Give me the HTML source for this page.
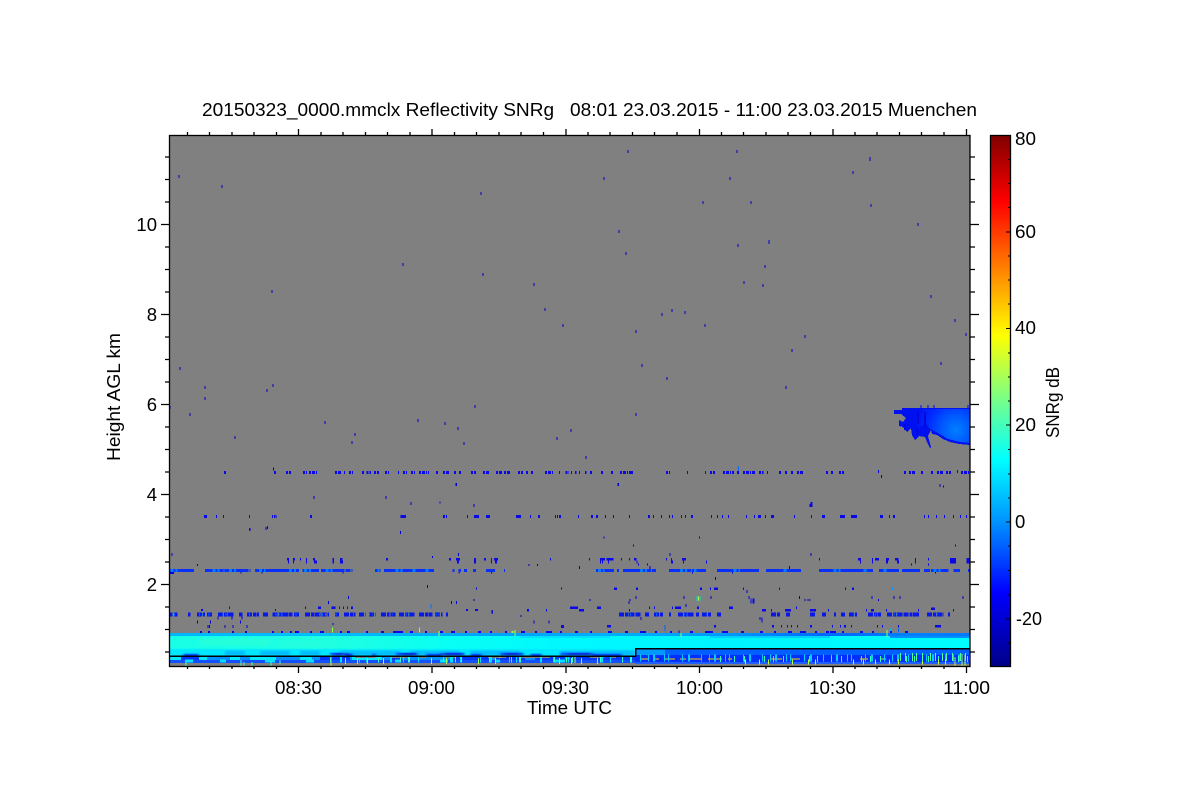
<!DOCTYPE html>
<html><head><meta charset="utf-8"><title>20150323_0000.mmclx Reflectivity SNRg</title>
<style>
html,body{margin:0;padding:0;background:#fff;width:1200px;height:800px;overflow:hidden}
svg{display:block}
text{font-family:"Liberation Sans",sans-serif;fill:#000;font-size:18.5px;white-space:pre}
</style></head><body>
<svg width="1200" height="800" viewBox="0 0 1200 800" xmlns="http://www.w3.org/2000/svg">
<defs>
<linearGradient id="cb" x1="0" y1="0" x2="0" y2="1">
<stop offset="0" stop-color="#800000"/><stop offset=".125" stop-color="#ff0000"/><stop offset=".25" stop-color="#ff8000"/><stop offset=".376" stop-color="#ffff00"/><stop offset=".49" stop-color="#80ff80"/><stop offset=".61" stop-color="#00ffff"/><stop offset=".73" stop-color="#0090ff"/><stop offset=".86" stop-color="#0000ff"/><stop offset="1" stop-color="#000088"/>
</linearGradient>
<linearGradient id="b1" x1="0" y1="0" x2="1" y2="0">
<stop offset="0" stop-color="#00b8ff"/><stop offset=".2" stop-color="#00c0ff"/><stop offset=".42" stop-color="#00a0ff"/><stop offset=".55" stop-color="#00b0ff"/><stop offset=".7" stop-color="#0098ff"/><stop offset=".82" stop-color="#0068ff"/><stop offset=".93" stop-color="#0080ff"/><stop offset="1" stop-color="#0078ff"/>
</linearGradient>
<linearGradient id="b2" x1="0" y1="0" x2="1" y2="0">
<stop offset="0" stop-color="#18ffe6"/><stop offset=".2" stop-color="#20ffe0"/><stop offset=".35" stop-color="#08fff4"/><stop offset=".5" stop-color="#00f8ff"/><stop offset=".7" stop-color="#00f4ff"/><stop offset="1" stop-color="#00fcff"/>
</linearGradient>
<radialGradient id="p" gradientUnits="userSpaceOnUse" cx="956" cy="430" r="42">
<stop offset="0" stop-color="#0080ff"/><stop offset=".35" stop-color="#0058ff"/><stop offset=".7" stop-color="#0028ff"/><stop offset="1" stop-color="#0010f0"/>
</radialGradient>
<filter id="soft" x="-2%" y="-30%" width="104%" height="160%"><feGaussianBlur stdDeviation="1.2 .6"/></filter>
<clipPath id="lf"><rect x="169" y="648" width="466" height="8"/></clipPath>
</defs>

<!-- plot background -->
<rect x="169" y="135" width="801" height="531" fill="#808080"/>

<g shape-rendering="crispEdges">
<!-- isolated specks in the upper region -->
<path stroke="#0000d0" stroke-width="1" fill="none" d="M179 175v3M222 185v3M481 192v3M628 150v3M604 177v3M737 150v3M730 177v3M870 157v4M853 171v3M871 204v3M918 223v3M703 201v3M751 201v3M738 244v3M769 240v4M619 230v3M626 252v3M403 263v3M483 273v3M534 283v3M765 265v3M763 284v3M744 281v3M272 290v3M545 308v3M563 324v3M662 313v3M672 309v3M685 311v3M705 324v3M805 335v3M792 349v3M931 295v3M955 319v3M966 333v3M941 362v3M786 386v3M667 377v3M636 330v3M642 364v3M180 367v3M205 386v3M205 397v3M273 384v3M267 389v3M170 406v3M190 413v3M475 405v3M325 421v3M418 419v3M445 422v3M458 427v3M464 442v3M235 436v3M355 433v3M352 441v3M557 437v3M571 429v3M586 456v3M636 413v3M618 483v3M456 483v3M474 504v3M386 496v3M411 502v3M314 496v3M810 504v3M940 484v3M401 515v3M250 528v3M266 527v3M311 515v3M276 515v3"/>

<!-- left half, coordinates as x3 crop of (169,460) -->
<g transform="translate(169 460) scale(.33333)" fill="none">
<path stroke="#0808e8" stroke-width="9" stroke-dasharray="6 3 9 3 3 3 12 3" d="M165 37h6M315 37h9M351 37h15M402 37h12M420 37h24M498 37h18M525 37h3M540 37h12M579 37h6M593 37h13M615 37h15M648 37h12M687 37h3M702 37h12M726 37h12M750 37h30M801 37h9M822 37h18M855 37h9M870 37h9M906 37h15M942 37h21M981 37h18M1005 37h21M1047 37h15M1071 37h9M1086 37h6M1128 37h24M1170 37h3M1190 37h10"/>
<path stroke="#0808e8" stroke-width="9" d="M105 169h9M141 169h3M162 169h3M240 169h3M309 169h3M315 169h3M423 169h6M696 169h15M822 169h6M831 169h3M894 169h3M915 169h15M951 169h12M1041 169h15M1083 169h3M1107 169h6M1158 169h3M1164 169h3M1170 169h6"/>
<path stroke="#0000d0" stroke-width="3" d="M313 22v9M86 312v6M9 279v9M435 108v9M651 108v9M813 125v6M915 132v9M862 69v9M241 206v6M295 198v9M694 213v9M790 288v6M868 279v9M1080 312v6M1105 312v6M216 335v6M279 335v6M522 335v6M870 335v6M967 335v6M775 375v9M922 383v6M1177 383v6M538 408v9M478 423v9M847 423v9M862 423v9M915 417v6"/>
<path stroke="#0808e8" stroke-width="8" d="M354 298h6M372 298h6M393 298h3M411 298h3M432 298h6M435 306h9M357 306h3M372 306h3M411 306h3M490 298h5M490 306h5M513 298h7M513 306h9M651 298h6M840 298h6M861 298h12M864 306h6M915 298h6M915 306h6M945 298h6M966 298h3M975 298h12M966 306h3M978 306h6M1143 298h3"/>
<path stroke="#0830f8" stroke-width="9" d="M3 331h72M108 331h130M242 331h3M258 331h132M400 331h50M456 331h70M530 331h15M548 331h3M618 331h17M645 331h150M850 331h6M868 331h8M885 331h9M912 331h9M951 331h27M1005 331h3"/>
<path stroke="#0080ff" stroke-width="9" stroke-dasharray="9 6 6 12 3 6" d="M5 331h25M130 331h40M180 331h30M270 331h20M360 331h25M405 331h25M470 331h30M625 331h6M680 331h22M730 331h15M770 331h12"/>
<path stroke="#0000d0" stroke-width="6" d="M3 339h12"/>
<path stroke="#0808e8" stroke-width="7" d="M180 443h3M408 443h3M447 443h9M487 443h13M510 443h3M522 443h3M534 443h3M546 443h6M96 450h6M318 450h3M891 450h6M918 450h9M969 455h3M1074 451h6M1131 451h3"/>
<path stroke="#0818e8" stroke-width="12" stroke-dasharray="15 3 9 2 18 2" d="M3 463h7M15 463h10M57 463h8M84 463h24M114 463h18M147 463h48M210 463h10M234 463h36M282 463h18M310 463h60M375 463h18M408 463h72M498 463h12M525 463h35M570 463h20M600 463h20M636 463h44M690 463h50M750 463h40M798 463h22M831 463h6"/>
<path stroke="#0080ff" stroke-width="6" stroke-dasharray="3 6" d="M15 463h5M90 463h12M118 463h8M160 463h14M240 463h8M320 463h20M380 463h8M450 463h25M500 463h6M600 463h10M660 463h10M710 463h12M800 463h12"/>
<path stroke="#0000d0" stroke-width="3" d="M147 470v9M189 470v9M219 470v9M85 481v9M124 481v9M214 481v9M1095 481v9M1140 481v9M117 495v9M122 495v9M168 495v9M192 495v9M234 495v9M492 489v6M1056 465v6M969 450v12"/>
<path stroke="#0808e8" stroke-width="9" d="M1176 499h9"/>
<path stroke="#0070ff" stroke-width="3" d="M786 432v14"/>
<path stroke="#90ff60" stroke-width="3" d="M490 503v15M751 503v15"/>
<path stroke="#90ff60" stroke-width="6" d="M1031 513v12"/>
</g>

<!-- right half, coordinates as x3 crop of (570,460) -->
<g transform="translate(570 460) scale(.33333)" fill="none">
<path stroke="#0808e8" stroke-width="9" stroke-dasharray="6 3 9 3 3 3 12 3" d="M3 37h3M15 37h5M27 37h3M45 37h5M60 37h6M93 37h9M123 37h6M150 37h40M288 37h12M351 37h3M405 37h3M420 37h15M459 37h33M501 37h9M519 37h36M567 37h13M591 37h3M627 37h9M645 37h6M663 37h6M681 37h18M768 37h6M783 37h9M807 37h15M924 34h3M1002 37h6M1017 37h18M1053 37h9M1083 37h9M1101 37h18M1128 37h15M1161 34h3M1173 37h27"/>
<path stroke="#0060ff" stroke-width="3" d="M505 20v12"/>
<path stroke="#0000d0" stroke-width="3" d="M145 69v9M934 45v9M1120 77v6M102 230v6M388 230v6M190 254v6M1156 254v6M300 279v9M723 279v9M28 318v9M240 318v9M658 318v9M205 311v6M232 311v6M436 351v9M367 335v6M487 335v6M1096 335v6M1024 311v6M1075 311v6M531 390v9M198 408v9M342 408v9M423 408v9M537 408v9M688 408v9M906 408v9M972 408v9M990 408v9M1179 408v9M60 417v6M180 417v6M177 423v9M705 417v6M714 417v6M720 417v6M925 417v6M213 471v9M570 471v9M576 472v15M348 432v9"/>
<path stroke="#0808e8" stroke-width="6" d="M725 126v15"/>
<path stroke="#0808e8" stroke-width="9" d="M24 169h3M63 169h6M78 169h6M105 169h3M129 169h3M177 169h3M234 169h6M249 169h3M273 169h3M297 169h3M306 169h3M333 169h3M345 169h3M363 169h6M423 169h3M441 169h3M456 169h3M474 169h3M528 169h3M552 169h3M564 169h9M585 169h3M603 169h9M672 169h3M723 169h3M756 169h9M810 169h15M843 169h18M930 169h9M957 169h3M969 169h6M1062 169h3M1074 169h3M1098 169h3M1122 169h3M1149 169h3M1170 169h3M1188 169h3"/>
<path stroke="#0808e8" stroke-width="8" d="M57 298h3M90 298h15M110 298h20M90 306h3M96 306h3M114 306h3M153 298h3M177 298h3M192 298h8M200 306h3M288 298h3M303 298h3M303 306h6M336 298h12M339 306h3M408 306h3M747 298h3M864 298h9M870 306h3M906 298h3M915 298h12M906 306h3M948 298h9M948 306h6M975 298h11M981 306h6M1035 298h3M1035 306h3M1074 298h3M1140 298h18M1140 306h18M1190 298h10M1190 306h10"/>
<path stroke="#0830f8" stroke-width="9" d="M78 331h54M141 331h6M159 331h99M297 331h111M441 331h126M588 331h105M747 331h162M927 331h60M996 331h54M1062 331h18M1083 331h52M1150 331h20M1194 331h6"/>
<path stroke="#0080ff" stroke-width="9" stroke-dasharray="9 6 6 12 3 6" d="M84 331h20M210 331h40M330 331h50M490 331h20M640 331h15M790 331h25M880 331h15M940 331h12M1090 331h30"/>
<path stroke="#0808e8" stroke-width="7" d="M132 386h9M198 386h6M390 386h6M420 386h3M432 386h12M519 386h3M627 386h3M825 386h3M846 386h6"/>
<path stroke="#0090ff" stroke-width="7" d="M966 386h3"/>
<path stroke="#0808e8" stroke-width="7" d="M0 443h24M81 443h12M237 443h3M252 443h3M306 443h3M315 443h18M381 443h6M477 443h12M678 443h3M27 451h15M177 451h3M576 451h12M603 451h3M645 451h18M720 451h18M774 451h3M888 451h3M903 451h9M948 451h3M1044 451h3M1083 446h12M1149 451h3"/>
<path stroke="#0818e8" stroke-width="12" stroke-dasharray="15 3 9 2 18 2" d="M147 463h66M225 463h12M252 463h27M297 463h6M324 463h48M378 463h9M396 463h27M441 463h12M603 463h27M648 463h12M720 463h18M756 463h12M792 463h6M813 463h12M837 463h24M894 463h39M951 463h96M1071 463h51M1134 463h6"/>
<path stroke="#0080ff" stroke-width="6" stroke-dasharray="3 6" d="M180 463h8M258 463h10M340 463h12M410 463h6M850 463h6M915 463h8M970 463h15M1100 463h8"/>
<path stroke="#0808e8" stroke-width="8" d="M111 499h12M432 499h6M606 499h6M633 499h3M651 499h3M663 499h3M681 499h3M720 499h6M786 499h3M810 499h3M822 499h6M843 499h3M921 499h3M936 499h3M984 499h3M1095 499h18"/>
<path stroke="#0000d0" stroke-width="3" d="M327 511v14"/>
<path stroke="#0060ff" stroke-width="3" d="M285 495v18"/>
<path stroke="#0060ff" stroke-width="3" d="M985 505v12"/>
<path stroke="#00c0ff" stroke-width="3" d="M961 506v12"/>
<path stroke="#00e0d0" stroke-width="3" d="M381 408v15M390 408v15"/>
<path stroke="#b0ff40" stroke-width="3" d="M385 410v12"/>
<path stroke="#0808e8" stroke-width="3" d="M543 416v15M552 416v15M549 416v15"/>
</g>

<!-- row directly above the band -->
<path stroke="#0808e8" stroke-width="2" fill="none" d="M200 632h2M208 632h2M232 632h2M245 632h2M272 632h2M281 632h2M290 632h2M295 632h4M310 632h2M320 632h4M340 632h2M347 632h3M366 632h2M381 632h3M393 632h10M410 632h3M425 632h2M440 632h3M451 632h4M465 632h2M478 632h3M490 632h2M505 632h2M521 632h4M535 632h2M546 632h6M560 632h2M575 632h3M590 632h2M608 632h4M625 632h3M640 632h6M655 632h2M670 632h2M690 632h3M705 632h8M722 632h6M741 632h3M760 632h3M774 632h2M788 632h4M800 632h6M815 632h2M826 632h3M830 632h6M842 632h2M860 632h3M872 632h2M890 632h2M905 632h3"/>

<!-- band: layered rows -->
<rect x="169" y="633" width="801" height="3" fill="url(#b1)"/>
<rect x="169" y="636" width="801" height="15" fill="url(#b2)"/>
<rect x="200" y="639" width="70" height="6" fill="#34ffd0" opacity=".4"/>
<rect x="280" y="641" width="40" height="6" fill="#30ffd8" opacity=".3"/>
<rect x="520" y="636" width="90" height="2" fill="#00e0ff"/>
<rect x="710" y="636" width="120" height="2" fill="#00d0ff"/>
<rect x="890" y="636" width="80" height="2" fill="#0090ff"/>
</g>

<!-- soft mottled rows, left -->
<g clip-path="url(#lf)">
<g filter="url(#soft)">
<rect x="160" y="649" width="480" height="8" fill="#00e8ff"/>
<path stroke="#00c0ff" stroke-width="5" fill="none" d="M225 653h20M260 653h30M300 653h20M340 653h60M410 653h50M470 653h50M560 653h75"/>
<path stroke="#0050ff" stroke-width="3" fill="none" d="M183 655h16M330 654h12M345 655h8M372 655h4M396 654h20M426 655h16M445 654h20M470 655h12M500 654h24M530 655h12M560 654h30M592 655h30"/>
<path stroke="#1018d8" stroke-width="2" fill="none" d="M335 654h15M402 654h16M440 654h22M505 654h14M568 654h26"/>
</g>
</g>

<g shape-rendering="crispEdges">
<!-- lower rows, left -->
<rect x="169" y="656" width="466" height="4" fill="#0090ff"/>
<path stroke="#00e8ff" stroke-width="4" fill="none" d="M169 658h12M199 658h8M230 658h10M250 658h26M300 658h12M352 658h30" />
<path stroke="#0038ff" stroke-width="4" fill="none" d="M181 658h18M320 658h30M390 658h12M450 658h40M495 658h30M535 658h30M570 658h65"/>
<rect x="169" y="660" width="466" height="3" fill="#1050ff"/>
<path stroke="#00e0ff" stroke-width="3" fill="none" d="M185 661h8M220 661h6M265 661h10M306 661h8M395 661h6M440 661h8M495 661h5M555 661h10"/>
<path stroke="#808080" stroke-width="2" fill="none" d="M355 657h20M390 657h18M420 657h6M445 657h10M488 657h18M520 657h30M590 657h14M610 657h6"/>
<!-- lower rows, right -->
<rect x="635" y="649" width="335" height="6" fill="#0060ff"/>
<rect x="635" y="649" width="30" height="6" fill="#0098ff"/>
<rect x="635" y="655" width="335" height="7" fill="#0030ff"/>
<rect x="635" y="662" width="335" height="2" fill="#2060ff"/>
<path stroke="#808080" stroke-width="2" fill="none" d="M640 659h8M655 659h4M665 659h10M680 659h6M690 659h12M708 659h14M728 659h4M770 659h12M790 659h10M860 659h8M880 659h6"/>
<!-- grey floor -->
<rect x="169" y="663" width="466" height="3" fill="#808080"/>
<rect x="635" y="664" width="335" height="2" fill="#808080"/>
<!-- pseudo-random vertical streaks -->
<path fill="none" stroke="#00e0ff" stroke-width="7" stroke-dasharray="1 9 2 17 1 6 1 23 2 11 1 14 1 31 3 7 1 19" d="M330 659H635"/>
<path fill="none" stroke="#30ffc8" stroke-width="7" stroke-dasharray="1 21 1 7 2 33 1 11 1 5 1 27" d="M378 659H635"/>
<path fill="none" stroke="#a0ff50" stroke-width="6" stroke-dasharray="1 11 1 9 1 15 1 47 1 14 1 31 1 16 1 63" d="M345 661H635"/>
<path fill="none" stroke="#00d0ff" stroke-width="7" stroke-dasharray="1 7 1 4 2 9 1 3 1 13 1 5 2 11" d="M640 658H970"/>
<path fill="none" stroke="#30ffb0" stroke-width="6" stroke-dasharray="1 13 1 9 1 19 1 8 1 9 1 25 1 7" d="M720 659H970"/>
<path fill="none" stroke="#c0ff30" stroke-width="5" stroke-dasharray="1 13 1 8 1 23 1 15 1 6 1 37 1 9 1 11" d="M745 662H970"/>
<path fill="none" stroke="#50ffa0" stroke-width="8" stroke-dasharray="1 4 1 6 1 3 1 5 1 7" d="M900 657H970"/>
<path fill="none" stroke="#a0ff50" stroke-width="1" d="M955 657v9M962 654v12M965 655v11"/>
<path fill="none" stroke="#40ffc0" stroke-width="1" d="M186 662v4M241 660v6M244 662v4M280 660v4M252 662v4M271 661v5"/>
<path fill="none" stroke="#a0ff50" stroke-width="1" d="M331 655v11M500 655v3M575 656v7M439 631v5M515 630v6M681 633v4M887 630v7"/>
<!-- black level line -->
<rect x="169" y="655.5" width="467" height="1.5" fill="#000"/>
<rect x="635" y="648.5" width="1.5" height="8" fill="#000"/>
<rect x="635" y="648" width="335" height="1.5" fill="#000"/>
</g>

<!-- upper-right echo -->
<g shape-rendering="crispEdges">
<polygon fill="#0010f0" points="894,410 902,410 902,408 970,408 970,445 959,444 950,442 943,439 937,435 932,434 931,430 928,436 931,447 930,448 927,442 925,437 919,436 915,440 912,435 911,428 907,432 903,427 899,426 899,420 903,422 906,418 901,414 894,414"/>
<polygon fill="url(#p)" points="908,412 912,409 970,409 970,443 960,442 948,439 938,433 930,429 926,424 918,428 914,420"/>
<path stroke="#0008e8" stroke-width="1" fill="none" d="M921 405v3M928 405v3M934 405v3M968 405v3"/>
<path stroke="#0808d8" stroke-width="2" fill="none" d="M905 424v6M917 428v7M925 412v16M918 412v12"/>
</g>

<!-- frame and ticks -->
<g fill="none" stroke="#000" stroke-width="1.3">
<rect x="169.5" y="135.5" width="800.5" height="531"/>
<path d="M161 224.5h8M161 314.5h8M161 404.5h8M161 494.5h8M161 584.5h8M165 157h4M165 179.5h4M165 202h4M165 247h4M165 269.5h4M165 292h4M165 337h4M165 359.5h4M165 382h4M165 427h4M165 449.5h4M165 472h4M165 517h4M165 539.5h4M165 562h4M165 607h4M165 629.5h4M165 652h4"/>
<path d="M970 224.5h9M970 314.5h9M970 404.5h9M970 494.5h9M970 584.5h9M970 157h5M970 179.5h5M970 202h5M970 247h5M970 269.5h5M970 292h5M970 337h5M970 359.5h5M970 382h5M970 427h5M970 449.5h5M970 472h5M970 517h5M970 539.5h5M970 562h5M970 607h5M970 629.5h5M970 652h5"/>
<path d="M298.5 666v7M432 666v7M566 666v7M699.5 666v7M833 666v7M966.5 666v7M187.5 666v3M209.5 666v3M232 666v3M254 666v3M276.5 666v3M321 666v3M343 666v3M365.5 666v3M387.5 666v3M410 666v3M454.5 666v3M476.5 666v3M499 666v3M521 666v3M543.5 666v3M588 666v3M610 666v3M632.5 666v3M654.5 666v3M677 666v3M721.5 666v3M743.5 666v3M766 666v3M788 666v3M810.5 666v3M855 666v3M877 666v3M899.5 666v3M921.5 666v3M944 666v3"/>
<path d="M298.5 129v6M432 129v6M566 129v6M699.5 129v6M833 129v6M966.5 129v6M187.5 132v3M209.5 132v3M232 132v3M254 132v3M276.5 132v3M321 132v3M343 132v3M365.5 132v3M387.5 132v3M410 132v3M454.5 132v3M476.5 132v3M499 132v3M521 132v3M543.5 132v3M588 132v3M610 132v3M632.5 132v3M654.5 132v3M677 132v3M721.5 132v3M743.5 132v3M766 132v3M788 132v3M810.5 132v3M855 132v3M877 132v3M899.5 132v3M921.5 132v3M944 132v3"/>
</g>

<!-- colorbar -->
<rect x="990.5" y="135.5" width="20" height="531" fill="url(#cb)" stroke="#000" stroke-width="1.3"/>
<path fill="none" stroke="#000" stroke-width="1" d="M1008 159.5h2M1008 183.5h2M1008 207.5h2M1006 232h4M1008 256h2M1008 280h2M1008 304h2M1006 328.5h4M1008 353h2M1008 377h2M1008 401h2M1006 425h4M1008 449.5h2M1008 474h2M1008 498h2M1006 522h4M1008 546h2M1008 570.5h2M1008 595h2M1006 619h4M1008 643h2"/>

<!-- text -->
<text x="202" y="116" textLength="775" lengthAdjust="spacingAndGlyphs">20150323_0000.mmclx Reflectivity SNRg   08:01 23.03.2015 - 11:00 23.03.2015 Muenchen</text>
<g text-anchor="end">
<text x="157" y="231">10</text><text x="157" y="321">8</text><text x="157" y="411">6</text><text x="157" y="501">4</text><text x="157" y="591">2</text>
</g>
<g>
<text x="275" y="694" textLength="47" lengthAdjust="spacingAndGlyphs">08:30</text><text x="408" y="694" textLength="47" lengthAdjust="spacingAndGlyphs">09:00</text><text x="542" y="694" textLength="47" lengthAdjust="spacingAndGlyphs">09:30</text><text x="676" y="694" textLength="47" lengthAdjust="spacingAndGlyphs">10:00</text><text x="809" y="694" textLength="47" lengthAdjust="spacingAndGlyphs">10:30</text><text x="943" y="694" textLength="47" lengthAdjust="spacingAndGlyphs">11:00</text>
</g>
<text x="527" y="714" textLength="85" lengthAdjust="spacingAndGlyphs">Time UTC</text>
<text transform="translate(120 461) rotate(-90)" textLength="128" lengthAdjust="spacingAndGlyphs">Height AGL km</text>
<g>
<text x="1015" y="145" textLength="21" lengthAdjust="spacingAndGlyphs">80</text><text x="1015" y="238" textLength="21" lengthAdjust="spacingAndGlyphs">60</text><text x="1015" y="334" textLength="21" lengthAdjust="spacingAndGlyphs">40</text><text x="1015" y="431" textLength="21" lengthAdjust="spacingAndGlyphs">20</text><text x="1015" y="528">0</text><text x="1016" y="625" textLength="26" lengthAdjust="spacingAndGlyphs">-20</text>
</g>
<text transform="translate(1059 438) rotate(-90)" textLength="71" lengthAdjust="spacingAndGlyphs">SNRg dB</text>
</svg>
</body></html>
